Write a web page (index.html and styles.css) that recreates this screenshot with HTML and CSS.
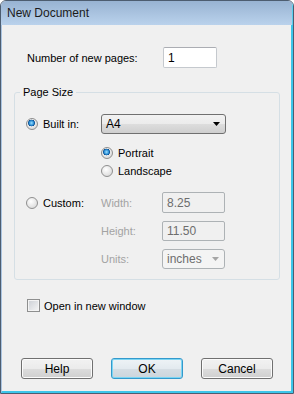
FILE: index.html
```html
<!DOCTYPE html>
<html lang="en">
<head>
    <meta charset="UTF-8">
    <title>New Document</title>
    <link rel="stylesheet" href="styles.css">
</head>
<body>
    <div class="window">
        <div class="titlebar">New Document</div>

        <div class="content">
            <div class="pages-row">
                <span class="pages-label">Number of new pages:</span>
                <div class="textbox">1</div>
            </div>

            <fieldset class="group">
                <legend>Page Size</legend>

                <div class="opt-row">
                    <label class="choice col-1"><span class="radio checked"></span>Built in:</label>
                    <div class="combo wide">
                        <span>A4</span>
                        <svg width="7" height="4" viewBox="0 0 7 4"><path d="M0 0H7L3.5 4Z" fill="#000"/></svg>
                    </div>
                </div>

                <div class="orientation">
                    <label class="choice"><span class="radio checked"></span>Portrait</label>
                    <label class="choice"><span class="radio"></span>Landscape</label>
                </div>

                <div class="opt-row custom-row">
                    <label class="choice col-1"><span class="radio"></span>Custom:</label>
                    <span class="field-label">Width:</span>
                    <div class="textbox disabled">8.25</div>
                </div>

                <div class="opt-row sub-row">
                    <span class="col-1"></span>
                    <span class="field-label">Height:</span>
                    <div class="textbox disabled tall">11.50</div>
                </div>

                <div class="opt-row sub-row">
                    <span class="col-1"></span>
                    <span class="field-label">Units:</span>
                    <div class="combo disabled">
                        <span>inches</span>
                        <svg width="7" height="4" viewBox="0 0 7 4"><path d="M0 0H7L3.5 4Z" fill="#a6a6a6"/></svg>
                    </div>
                </div>
            </fieldset>

            <label class="check-row"><span class="checkbox"></span>Open in new window</label>

            <div class="buttons">
                <button class="btn">Help</button>
                <button class="btn default">OK</button>
                <button class="btn">Cancel</button>
            </div>
        </div>
    </div>
</body>
</html>
```

FILE: styles.css
```css
body {
    margin: 0;
    background: #ffffff;
    font-family: 'Liberation Sans', Arial, sans-serif;
    font-size: 11px;
    color: #000;
}

.window {
    width: 294px;
    height: 394px;
    box-sizing: border-box;
    border: 1px solid #4d5d70;
    border-radius: 6px 6px 0 0;
    background: #f0f0f0;
    display: flex;
    flex-direction: column;
    overflow: hidden;
}

.titlebar {
    height: 24px;
    line-height: 25px;
    padding-left: 6px;
    font-size: 12px;
    color: #1b1b1b;
    background: linear-gradient(#98b3d2, #bad2ec);
    border-right: 1px solid #5ad0ef;
}

.content {
    flex: 1;
    display: flex;
    flex-direction: column;
    padding: 22px 11px 0 12px;
    border-left: 1px solid #aac4e1;
    border-right: 2px solid #3cc6ea;
    border-bottom: 2px solid #3cc6ea;
}

.pages-row {
    display: flex;
    align-items: center;
    height: 21px;
}

.pages-label {
    width: 136px;
    padding-left: 13px;
}

.textbox {
    width: 54px;
    height: 21px;
    box-sizing: border-box;
    border: 1px solid #c5c9ce;
    border-top-color: #abadb3;
    border-radius: 2px;
    background: #fff;
    padding: 3px 0 0 4px;
    font-size: 12px;
}

.textbox.disabled {
    width: 63px;
    background: #f0f0f0;
    border-color: #adb2b5;
    color: #6d6d6d;
}

.textbox.tall {
    height: 20px;
    padding-top: 2px;
}

.group {
    margin: 17px 0 0;
    padding: 15px 10px 10px 11px;
    border: 1px solid #d5dfe5;
    border-radius: 3px;
}

.group legend {
    margin-left: -6px;
    padding: 0 3px;
    line-height: 14px;
}

.opt-row {
    display: flex;
    align-items: center;
    height: 20px;
}

.custom-row {
    margin-top: 13px;
    height: 21px;
}

.sub-row {
    margin-top: 8px;
}

.col-1 {
    width: 75px;
    flex: none;
}

.field-label {
    width: 61px;
    color: #a3a3a3;
}

.choice {
    display: flex;
    align-items: center;
    height: 16px;
}

.radio {
    width: 12px;
    height: 12px;
    margin-right: 5px;
    box-sizing: border-box;
    border: 1px solid #8f8f8f;
    border-radius: 50%;
    background: radial-gradient(circle at 40% 35%, #ffffff 0%, #e4e4e4 60%, #cfcfcf 100%);
    flex: none;
}

.radio.checked {
    background:
        radial-gradient(circle at 45% 40%, #9ee0ff 0%, #2b8fd6 28%, #0f4f8f 40%, rgba(15, 79, 143, 0) 44%),
        radial-gradient(circle at 40% 35%, #ffffff 0%, #e4e4e4 60%, #cfcfcf 100%);
}

.orientation {
    display: flex;
    flex-direction: column;
    gap: 2px;
    margin: 11px 0 0 75px;
}

.combo {
    width: 63px;
    height: 20px;
    box-sizing: border-box;
    display: flex;
    align-items: center;
    justify-content: space-between;
    padding: 0 5px 0 4px;
    border: 1px solid #707070;
    border-radius: 3px;
    background: linear-gradient(#f2f2f2 0%, #ebebeb 50%, #dddddd 50%, #cfcfcf 100%);
    font-size: 12px;
}

.combo.wide {
    width: 125px;
}

.combo.disabled {
    background: #f4f4f4;
    border-color: #adb2b5;
    color: #6d6d6d;
}

.check-row {
    display: flex;
    align-items: center;
    margin-top: 19px;
    padding-left: 13px;
    height: 13px;
}

.checkbox {
    width: 13px;
    height: 13px;
    box-sizing: border-box;
    margin-right: 4px;
    border: 1px solid #8e8f8f;
    background: linear-gradient(135deg, #cbcfd5, #f6f6f6);
    box-shadow: inset 0 0 0 1px #f4f4f4;
}

.buttons {
    margin-top: auto;
    margin-bottom: 12px;
    display: flex;
    justify-content: center;
    gap: 18px;
}

.btn {
    width: 72px;
    height: 21px;
    padding: 0;
    border: 1px solid #707070;
    border-radius: 3px;
    background: linear-gradient(#f2f2f2 0%, #ebebeb 50%, #dddddd 50%, #cfcfcf 100%);
    box-shadow: inset 0 0 0 1px #fbfbfb;
    font-family: inherit;
    font-size: 12px;
    color: #000;
}

.btn.default {
    border-color: #3399cc;
    box-shadow: inset 0 0 0 1px #7cd5f3;
    background: linear-gradient(#eef3f6 0%, #e3eaef 50%, #d6dee4 50%, #ccd5dc 100%);
}
```
